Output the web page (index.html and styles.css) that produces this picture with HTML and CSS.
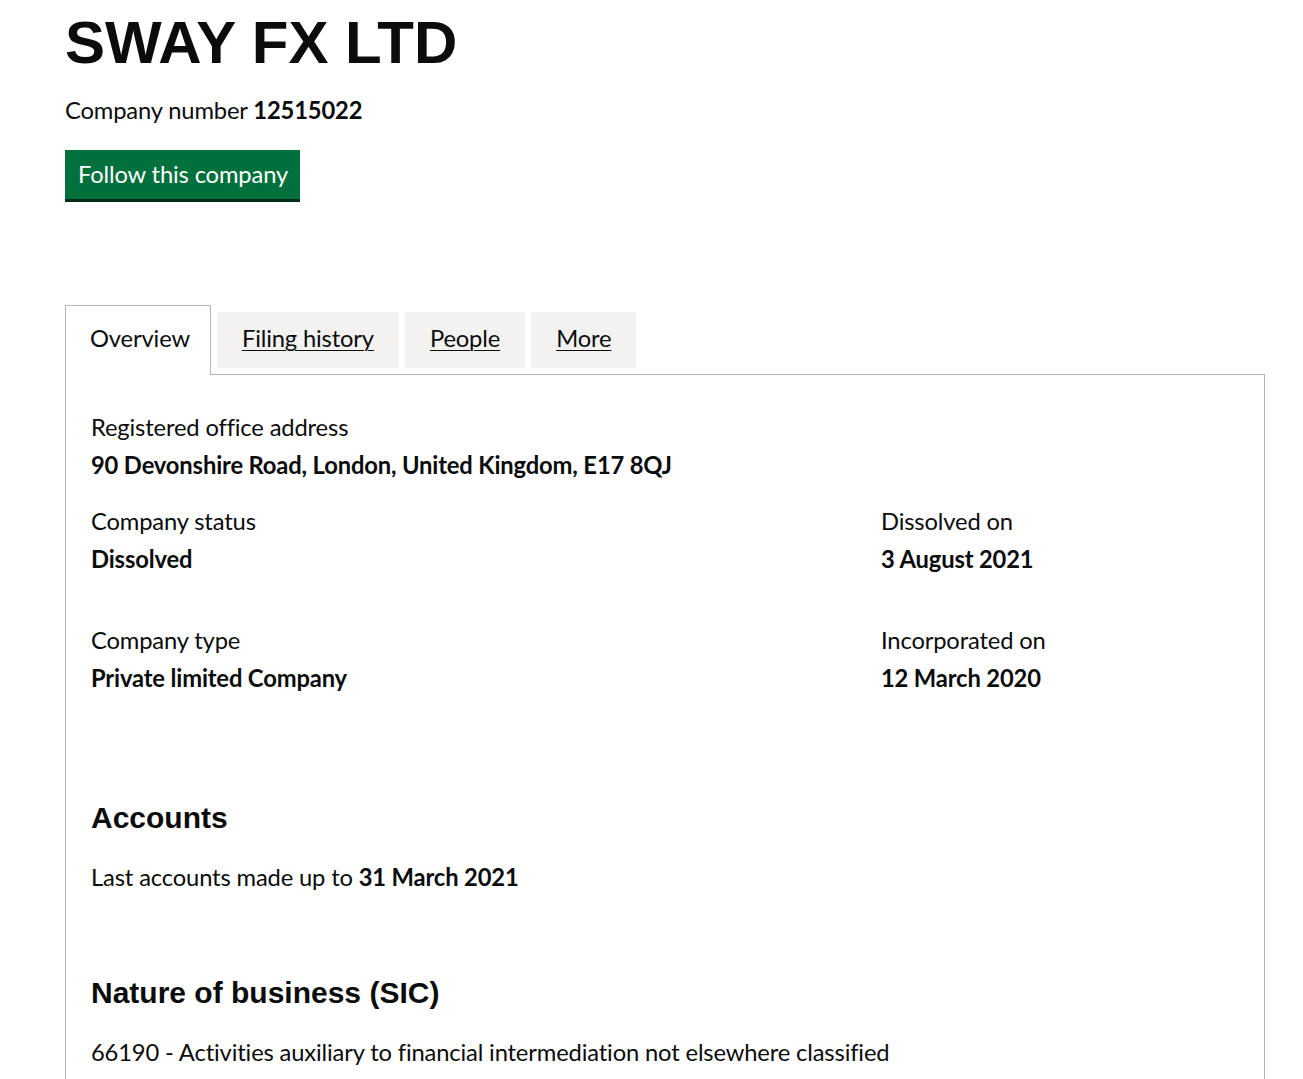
FILE: index.html
```html
<!DOCTYPE html>
<html lang="en">
<head>
    <meta charset="UTF-8">
    <meta name="viewport" content="width=device-width, initial-scale=1.0">
    <title>SWAY FX LTD - Overview</title>
    <link rel="stylesheet" href="styles.css">
</head>
<body>
    <div class="page">
        <h1 class="company-name">SWAY FX LTD</h1>
        <p class="company-number">Company number <strong>12515022</strong></p>
        <a class="follow-btn" href="#">Follow this company</a>

        <ul class="tabs">
            <li class="tab tab-selected">Overview</li>
            <li class="tab"><a href="#">Filing history</a></li>
            <li class="tab"><a href="#">People</a></li>
            <li class="tab"><a href="#">More</a></li>
        </ul>

        <div class="panel">
            <dl class="field">
                <dt>Registered office address</dt>
                <dd>90 Devonshire Road, London, United Kingdom, E17 8QJ</dd>
            </dl>

            <div class="row">
                <dl class="field">
                    <dt>Company status</dt>
                    <dd>Dissolved</dd>
                </dl>
                <dl class="field">
                    <dt>Dissolved on</dt>
                    <dd>3 August 2021</dd>
                </dl>
            </div>

            <div class="row row-type">
                <dl class="field">
                    <dt>Company type</dt>
                    <dd>Private limited Company</dd>
                </dl>
                <dl class="field">
                    <dt>Incorporated on</dt>
                    <dd>12 March 2020</dd>
                </dl>
            </div>

            <h2 class="section-head accounts-head">Accounts</h2>
            <p class="body-text">Last accounts made up to <strong>31 March 2021</strong></p>

            <h2 class="section-head sic-head">Nature of business (SIC)</h2>
            <ul class="sic-list">
                <li>66190 - Activities auxiliary to financial intermediation not elsewhere classified</li>
            </ul>
        </div>
    </div>
</body>
</html>
```

FILE: styles.css
```css
body {
    margin: 0;
    background: #fff;
    color: #0b0c0c;
    font-family: Lato, "Liberation Sans", sans-serif;
    font-size: 23.75px;
    line-height: 31px;
    letter-spacing: -0.15px;
}
.page {
    width: 1200px;
    margin-left: 65px;
    padding-top: 10px;
}
.company-name {
    margin: 0;
    font-family: "Liberation Sans", Arial, sans-serif;
    font-size: 60px;
    line-height: 66px;
    font-weight: bold;
    letter-spacing: 0;
}
.company-number {
    margin: 19px 0 0;
}
strong {
    font-weight: bold;
}
.follow-btn {
    display: inline-block;
    margin-top: 24px;
    padding: 9px 12px 9px 13px;
    background: #00703c;
    box-shadow: 0 3px 0 #002d18;
    color: #fff;
    text-decoration: none;
}

/* tabs */
.tabs {
    display: flex;
    align-items: flex-start;
    list-style: none;
    margin: 106px 0 -1px;
    padding: 0;
}
.tab {
    margin: 7px 6px 0 0;
    padding: 11px 25px 14px;
    background: #f3f2f1;
}
.tab a {
    color: #0b0c0c;
    text-decoration: underline;
    text-decoration-thickness: 1px;
    text-underline-offset: 3px;
}
.tab-selected {
    position: relative;
    margin-top: 0;
    padding: 17px 20px 21px 24px;
    border: 1px solid #b1b4b6;
    border-bottom: 0;
    background: #fff;
}

/* panel */
.panel {
    border: 1px solid #b1b4b6;
    border-bottom: 0;
    padding: 37px 25px 40px;
}
.field {
    margin: 0;
}
.field dt {
    margin-bottom: 7px;
}
.field dd {
    margin: 0;
    font-weight: bold;
}
.row {
    display: grid;
    grid-template-columns: 790px 1fr;
    margin-top: 25px;
}
.row-type {
    margin-top: 50px;
}
.section-head {
    margin: 0;
    font-family: "Liberation Sans", Arial, sans-serif;
    font-size: 30px;
    line-height: 37.5px;
    font-weight: bold;
    letter-spacing: 0;
}
.accounts-head {
    margin-top: 105px;
}
.body-text {
    margin: 25px 0 0;
}
.sic-head {
    margin-top: 81px;
}
.sic-list {
    list-style: none;
    margin: 26px 0 0;
    padding: 0;
}
```
